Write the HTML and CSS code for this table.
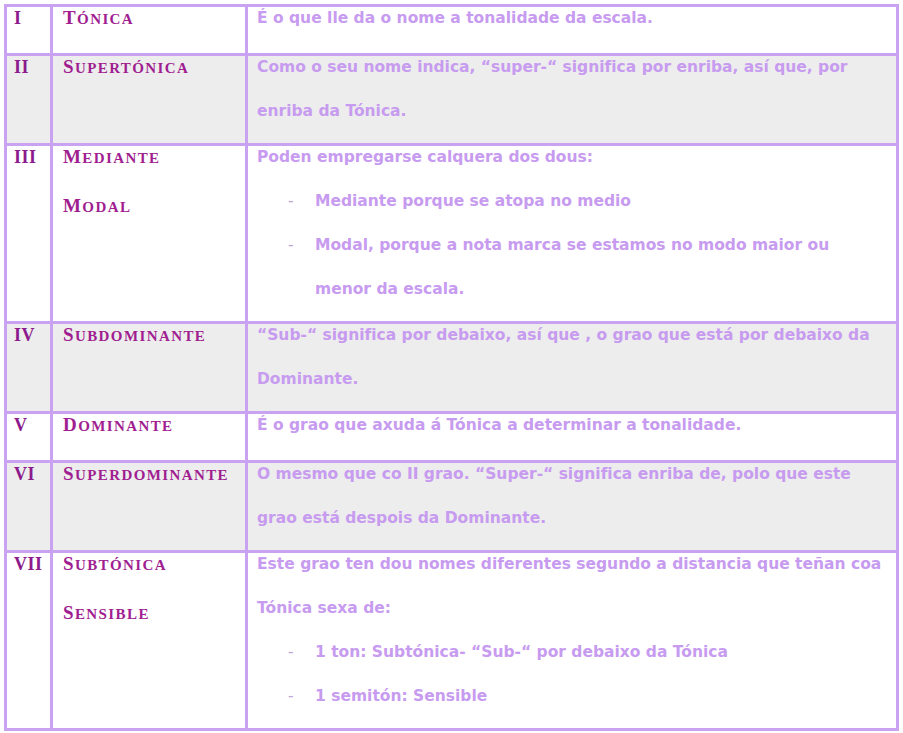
FILE: index.html
```html
<!DOCTYPE html>
<html lang="gl">
<head>
<meta charset="utf-8">
<title>Graos da escala</title>
<link rel="stylesheet" href="styles.css">
</head>
<body>
<table class="grades">
  <tr>
    <td class="num"><div class="c">I</div></td>
    <td class="name"><div class="c"><p>T<span class="sc">ónica</span></p></div></td>
    <td class="desc"><div class="c">É o que lle da o nome a tonalidade da escala.</div></td>
  </tr>
  <tr class="alt">
    <td class="num"><div class="c">II</div></td>
    <td class="name"><div class="c"><p>S<span class="sc">upertónica</span></p></div></td>
    <td class="desc"><div class="c">Como o seu nome indica, “super-“ significa por enriba, así que, por<br>enriba da Tónica.</div></td>
  </tr>
  <tr>
    <td class="num"><div class="c">III</div></td>
    <td class="name"><div class="c"><p>M<span class="sc">ediante</span></p><p>M<span class="sc">odal</span></p></div></td>
    <td class="desc"><div class="c">Poden empregarse calquera dos dous:
      <div class="item"><span class="dash">-</span><span>Mediante porque se atopa no medio</span></div>
      <div class="item"><span class="dash">-</span><span>Modal, porque a nota marca se estamos no modo maior ou<br>menor da escala.</span></div>
    </div></td>
  </tr>
  <tr class="alt">
    <td class="num"><div class="c">IV</div></td>
    <td class="name"><div class="c"><p>S<span class="sc">ubdominante</span></p></div></td>
    <td class="desc"><div class="c">“Sub-“ significa por debaixo, así que , o grao que está por debaixo da<br>Dominante.</div></td>
  </tr>
  <tr>
    <td class="num"><div class="c">V</div></td>
    <td class="name"><div class="c"><p>D<span class="sc">ominante</span></p></div></td>
    <td class="desc"><div class="c">É o grao que axuda á Tónica a determinar a tonalidade.</div></td>
  </tr>
  <tr class="alt">
    <td class="num"><div class="c">VI</div></td>
    <td class="name"><div class="c"><p>S<span class="sc">uperdominante</span></p></div></td>
    <td class="desc"><div class="c">O mesmo que co II grao. “Super-“ significa enriba de, polo que este<br>grao está despois da Dominante.</div></td>
  </tr>
  <tr>
    <td class="num"><div class="c">VII</div></td>
    <td class="name"><div class="c"><p>S<span class="sc">ubtónica</span></p><p>S<span class="sc">ensible</span></p></div></td>
    <td class="desc"><div class="c">Este grao ten dou nomes diferentes segundo a distancia que teñan coa<br>Tónica sexa de:
      <div class="item"><span class="dash">-</span><span>1 ton: Subtónica- “Sub-“ por debaixo da Tónica</span></div>
      <div class="item"><span class="dash">-</span><span>1 semitón: Sensible</span></div>
    </div></td>
  </tr>
</table>
</body>
</html>
```

FILE: styles.css
```css
html, body {
  margin: 0;
  padding: 0;
  background: #ffffff;
}

.grades {
  margin: 4px;
  width: 892px;
  border-collapse: separate;
  border-spacing: 0;
  table-layout: fixed;
  border-top: 3px solid #c9a2f1;
  border-left: 3px solid #c9a2f1;
}

.grades td {
  box-sizing: border-box;
  vertical-align: top;
  border-right: 3px solid #c9a2f1;
  border-bottom: 3px solid #c9a2f1;
  padding: 0 0 10px 0;
}

.grades tr.alt td {
  background: #ededed;
}

.num {
  width: 46px;
  padding-left: 7px !important;
  font-family: "Liberation Serif", serif;
  font-weight: bold;
  font-size: 18px;
  letter-spacing: 0.5px;
  color: #8c1a8c;
}

.num .c {
  line-height: 44px;
  margin-top: -11px;
}

.name {
  width: 195px;
  padding-left: 10px !important;
  font-family: "Liberation Serif", serif;
  font-weight: bold;
  font-size: 19px;
  color: #a01e90;
  letter-spacing: 1.4px;
}

.name .c {
  margin-top: -13px;
}

.name p {
  margin: 0;
  line-height: 48px;
}

.sc {
  text-transform: uppercase;
  font-size: 15px;
}

.desc {
  width: 651px;
  padding-left: 9px !important;
  font-family: "DejaVu Sans", sans-serif;
  font-weight: bold;
  font-size: 15.5px;
  color: #c79bef;
}

.desc .c {
  line-height: 44px;
  margin-top: -11px;
}

.item {
  display: flex;
  padding-left: 31px;
}

.dash {
  width: 27px;
  flex: none;
  font-weight: normal;
  color: #b9a6d2;
}
```
